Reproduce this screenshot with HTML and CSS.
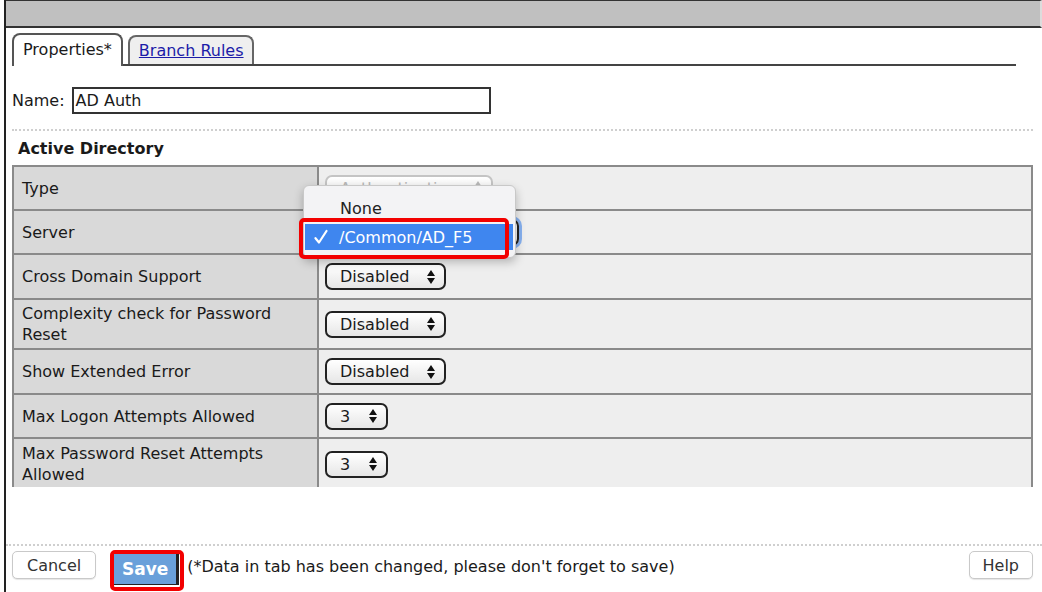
FILE: index.html
```html
<!DOCTYPE html>
<html>
<head>
<meta charset="utf-8">
<link rel="stylesheet" href="styles.css">
</head>
<body>
<div class="window">
  <div class="titlebar"></div>
  <div class="main">
    <div class="tabs">
      <div class="tab active">Properties*</div>
      <div class="tab"><a href="#">Branch Rules</a></div>
    </div>
    <div class="scroll">
      <div class="name-row">
        <label class="name-label">Name:</label>
        <div class="name-input">AD Auth</div>
      </div>
      <div class="sep"></div>
      <div class="section-title">Active Directory</div>
      <div class="table-wrap">
        <table class="props">
          <tr class="r44">
            <td class="k">Type</td>
            <td class="v"><span class="sel disabled sel-type">Authentication<span class="arr"><svg width="10" height="16" viewBox="0 0 10 16"><path d="M1 7 L5 1 L9 7 Z M1 9 L5 15 L9 9 Z" fill="currentColor"/></svg></span></span></td>
          </tr>
          <tr class="r44">
            <td class="k">Server</td>
            <td class="v"><span class="sel focus sel-server"><span class="hidden-val">/Common/AD_F5</span><span class="arr"><svg width="10" height="16" viewBox="0 0 10 16"><path d="M1 7 L5 1 L9 7 Z M1 9 L5 15 L9 9 Z" fill="currentColor"/></svg></span></span></td>
          </tr>
          <tr class="r45">
            <td class="k">Cross Domain Support</td>
            <td class="v"><span class="sel sel-dis">Disabled<span class="arr"><svg width="10" height="16" viewBox="0 0 10 16"><path d="M1 7 L5 1 L9 7 Z M1 9 L5 15 L9 9 Z" fill="currentColor"/></svg></span></span></td>
          </tr>
          <tr class="r50">
            <td class="k">Complexity check for Password Reset</td>
            <td class="v"><span class="sel sel-dis">Disabled<span class="arr"><svg width="10" height="16" viewBox="0 0 10 16"><path d="M1 7 L5 1 L9 7 Z M1 9 L5 15 L9 9 Z" fill="currentColor"/></svg></span></span></td>
          </tr>
          <tr class="r45">
            <td class="k">Show Extended Error</td>
            <td class="v"><span class="sel sel-dis">Disabled<span class="arr"><svg width="10" height="16" viewBox="0 0 10 16"><path d="M1 7 L5 1 L9 7 Z M1 9 L5 15 L9 9 Z" fill="currentColor"/></svg></span></span></td>
          </tr>
          <tr class="r44">
            <td class="k">Max Logon Attempts Allowed</td>
            <td class="v"><span class="sel sel-num">3<span class="arr"><svg width="10" height="16" viewBox="0 0 10 16"><path d="M1 7 L5 1 L9 7 Z M1 9 L5 15 L9 9 Z" fill="currentColor"/></svg></span></span></td>
          </tr>
          <tr class="r52">
            <td class="k">Max Password Reset Attempts Allowed</td>
            <td class="v"><span class="sel sel-num">3<span class="arr"><svg width="10" height="16" viewBox="0 0 10 16"><path d="M1 7 L5 1 L9 7 Z M1 9 L5 15 L9 9 Z" fill="currentColor"/></svg></span></span></td>
          </tr>
          <tr class="r44">
            <td class="k"></td>
            <td class="v"></td>
          </tr>
        </table>
        <div class="popup">
          <div class="opt">None</div>
          <div class="opt selected"><span class="check"><svg width="14" height="16" viewBox="0 0 14 16"><path d="M1.5 9.2 L5 13.5 L12.5 2" fill="none" stroke="#fff" stroke-width="2.2" stroke-linecap="round" stroke-linejoin="round"/></svg></span>/Common/AD_F5</div>
        </div>
        <div class="redbox"></div>
      </div>
    </div>
  </div>
  <div class="footer">
    <button class="btn cancel">Cancel</button>
    <span class="save-box"><button class="save">Save</button></span>
    <span class="note">(*Data in tab has been changed, please don't forget to save)</span>
    <button class="btn help">Help</button>
  </div>
</div>
</body>
</html>
```

FILE: styles.css
```css
html, body {
  margin: 0;
  padding: 0;
  background: #fff;
}
body {
  font-family: "DejaVu Sans", Verdana, sans-serif;
  font-size: 16px;
  color: #1a1a1a;
  width: 1042px;
  height: 592px;
  overflow: hidden;
}
.window {
  margin-left: 4px;
  border-left: 2px solid #222;
  height: 592px;
  display: flex;
  flex-direction: column;
  box-sizing: border-box;
}
.titlebar {
  height: 25px;
  background: #c0c0c0;
  border-top: 1px solid #333;
  border-bottom: 2px solid #333;
  border-right: 2px solid #dcdcdc;
  flex: none;
}
.main {
  padding: 0 9px 0 6px;
  flex: none;
}
.tabs {
  display: flex;
  align-items: flex-end;
  gap: 5px;
  margin-top: 5px;
  margin-right: 17px;
  border-bottom: 2px solid #444;
  height: 31px;
}
.tab {
  height: 29px;
  box-sizing: border-box;
  border: 2px solid #666;
  border-bottom: none;
  border-radius: 8px 8px 0 0;
  padding: 0 8px 0 9px;
  display: flex;
  align-items: center;
  background: #efefef;
  font-size: 16px;
}
.tab.active {
  background: #fff;
  height: 33px;
  margin-bottom: -2px;
  padding: 0 9px 2px 9px;
  border-color: #555;
}
.tab a {
  color: #1c1ca8;
  text-decoration: underline;
}
.scroll {
  height: 421px;
  overflow: hidden;
}
.name-row {
  display: flex;
  align-items: center;
  margin-top: 21px;
  height: 27px;
}
.name-label {
  margin-right: 7px;
}
.name-input {
  width: 419px;
  height: 27px;
  box-sizing: border-box;
  border: 2px solid #333;
  padding: 0 2px;
  line-height: 23px;
  background: #fff;
}
.sep {
  margin-top: 15px;
  border-top: 2px dotted #cfcfcf;
}
.section-title {
  font-weight: bold;
  padding-left: 6px;
  margin-top: 8px;
  line-height: 20px;
}
.table-wrap {
  position: relative;
  margin-top: 6px;
}
.props {
  border-collapse: collapse;
  width: 1021px;
  border: 2px solid #8a8a8a;
}
.props td {
  border: 2px solid #8a8a8a;
  padding: 0;
  line-height: 21px;
}
.props td.k {
  width: 291px;
  background: #d9d9d9;
  padding-left: 8px;
  padding-right: 4px;
}
.props td.v {
  background: #eeeeee;
  padding-left: 6px;
}
.r44 { height: 44px; }
.r45 { height: 45px; }
.r50 { height: 50px; }
.r52 { height: 52px; }
.sel {
  display: inline-flex;
  align-items: center;
  justify-content: space-between;
  height: 27px;
  box-sizing: border-box;
  border: 2px solid #222;
  border-radius: 7px;
  background: linear-gradient(#ffffff, #e6e6e6);
  padding: 0 8px 0 13px;
  vertical-align: middle;
  font-size: 16px;
}
.sel .arr {
  display: inline-flex;
  color: #111;
}
.sel-dis { width: 121px; }
.sel-num { width: 63px; }
.sel-type {
  width: 168px;
  border-color: #c4c4c4;
  color: #b8b8b8;
}
.sel-type .arr { color: #b8b8b8; }
.sel-server {
  width: 194px;
  box-shadow: 0 0 0 3px rgba(90, 150, 240, 0.7);
}
.hidden-val {
  visibility: hidden;
}
.popup {
  position: absolute;
  left: 291px;
  top: 20px;
  width: 213px;
  height: 73px;
  box-sizing: border-box;
  background: #f3f3f5;
  border: 1px solid #c8c8c8;
  border-radius: 6px;
  box-shadow: 0 4px 10px rgba(0, 0, 0, 0.25);
  padding-top: 10px;
}
.opt {
  height: 25px;
  line-height: 25px;
  padding-left: 36px;
  color: #222;
  font-size: 16px;
}
.opt.selected {
  display: flex;
  align-items: center;
  margin: 3px 2px 0 1px;
  height: 26px;
  padding-left: 9px;
  background: #3f86ef;
  color: #fff;
}
.check {
  display: inline-flex;
  width: 25px;
}
.redbox {
  position: absolute;
  left: 287px;
  top: 53px;
  width: 210px;
  height: 41px;
  box-sizing: border-box;
  border: 4px solid #f20000;
  border-radius: 5px;
}
.footer {
  margin-top: auto;
  border-top: 2px dotted #cfcfcf;
  display: flex;
  align-items: flex-start;
  padding: 5px 9px 0 6px;
  height: 48px;
  box-sizing: border-box;
}
.btn {
  font-family: "DejaVu Sans", Verdana, sans-serif;
  font-size: 16px;
  color: #333;
  background: #fff;
  border: 1px solid #c9c9c9;
  border-radius: 5px;
  height: 28px;
  padding: 0 13px;
  box-shadow: 0 1px 1px rgba(0,0,0,0.1);
}
.btn.cancel {
  padding: 0 14px;
}
.save-box {
  display: inline-flex;
  margin-left: 14px;
  margin-top: -1px;
  border: 4px solid #f20000;
  border-radius: 5px;
  padding: 0 1px 2px 0;
}
.save {
  font-family: "DejaVu Sans", Verdana, sans-serif;
  font-size: 17px;
  font-weight: bold;
  color: #fff;
  background: #6aa0da;
  border: none;
  border-right: 3px solid #222;
  border-bottom: 1px solid #222;
  height: 31px;
  width: 65px;
  padding: 0;
}
.note {
  margin-left: 3px;
  margin-top: 6px;
  line-height: 20px;
}
.help {
  margin-left: auto;
}
```
